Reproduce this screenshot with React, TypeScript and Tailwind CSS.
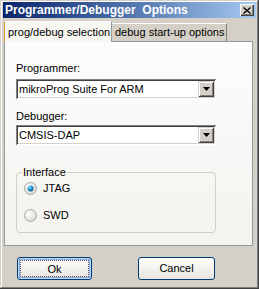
import React from "react";

const font = { fontFamily: '"Liberation Sans", Arial, sans-serif' };

function Select({ value }: { value: string }) {
  return (
    <div className="flex h-[20px] w-[200px] items-stretch bg-white shadow-[inset_1px_1px_#808080,inset_-1px_-1px_#ffffff,inset_2px_2px_#404040,inset_-2px_-2px_#d4d0c8] p-[2px]">
      <div className="flex-1 whitespace-nowrap pl-[1px] text-[11px] leading-[16px] text-black">{value}</div>
      <div className="flex w-[16px] items-center justify-center bg-[#d4d0c8] shadow-[inset_1px_1px_#d4d0c8,inset_-1px_-1px_#404040,inset_2px_2px_#ffffff,inset_-2px_-2px_#808080]">
        <svg width="7" height="4" viewBox="0 0 7 4">
          <path d="M0 0h7L3.5 4z" fill="#000" />
        </svg>
      </div>
    </div>
  );
}

function Radio({ checked, label }: { checked?: boolean; label: string }) {
  return (
    <div className="flex items-center gap-[6px]">
      <svg width="13" height="13" viewBox="0 0 13 13">
        <defs>
          <radialGradient id={"rg" + label} cx="0.35" cy="0.35" r="0.8">
            <stop offset="0" stopColor="#ffffff" />
            <stop offset="1" stopColor="#d6d3ce" />
          </radialGradient>
          <radialGradient id={"rd" + label} cx="0.35" cy="0.3" r="0.7">
            <stop offset="0" stopColor="#8ee4ff" />
            <stop offset="0.5" stopColor="#2a9ad8" />
            <stop offset="1" stopColor="#0a5b8a" />
          </radialGradient>
        </defs>
        <circle cx="6.5" cy="6.5" r="6" fill={"url(#rg" + label + ")"} stroke="#a8a8a0" strokeWidth="1" />
        {checked && <circle cx="6.5" cy="6.5" r="3" fill={"url(#rd" + label + ")"} />}
      </svg>
      <span className="text-[11px] leading-[14px] text-black">{label}</span>
    </div>
  );
}

export default function App() {
  return (
    <div
      className="flex h-[289px] w-[259px] flex-col bg-[#d4d0c8] px-[2px] pt-[2px] shadow-[inset_-1px_-1px_#404040,inset_1px_1px_#d4d0c8,inset_-2px_-2px_#808080,inset_2px_2px_#ffffff]"
      style={font}
    >
      {/* title bar */}
      <div className="ml-[1px] mr-[1px] flex h-[16px] items-center justify-between bg-gradient-to-r from-[#0a246a] to-[#a6caf0] pl-[2px] pr-[2px]">
        <span className="whitespace-nowrap text-[12px] font-bold leading-[16px] text-white">
          Programmer/Debugger&nbsp; Options
        </span>
        <div className="flex h-[12px] w-[14px] items-center justify-center bg-[#d4d0c8] shadow-[inset_1px_1px_#ffffff,inset_-1px_-1px_#404040,inset_-2px_-2px_#808080]">
          <svg width="8" height="7" viewBox="0 0 8 7">
            <path d="M0.5 0.5L7.5 6.5M7.5 0.5L0.5 6.5" stroke="#000" strokeWidth="1.3" />
          </svg>
        </div>
      </div>

      {/* tabs */}
      <div className="relative z-10 mt-[3px] flex items-end pl-[2px]">
        <div className="relative -mb-[1px] flex h-[21px] w-[108px] items-center whitespace-nowrap border-l border-t border-r border-l-[#e0a040] border-t-[#fcfcfc] border-r-[#919b9c] bg-[#f7f6f1] pl-[3px] text-[11px] text-black">
          prog/debug selection
        </div>
        <div className="flex h-[18px] w-[115px] items-center whitespace-nowrap border-t border-r border-t-[#ffffff] border-r-[#808080] bg-[#d4d0c8] pl-[3px] text-[11px] text-black">
          debug start-up options
        </div>
      </div>

      {/* panel */}
      <div className="ml-[2px] mr-[4px] flex h-[205px] flex-col border border-[#919b9c] bg-gradient-to-b from-[#fcfcfe] to-[#f4f3ee] px-[11px] pt-[19px]">
        <div className="mb-[4px] text-[11px] leading-[14px] text-black">Programmer:</div>
        <Select value="mikroProg Suite For ARM" />
        <div className="mb-[2px] mt-[10px] text-[11px] leading-[14px] text-black">Debugger:</div>
        <Select value="CMSIS-DAP" />
        <div className="relative mt-[27px] h-[61px] w-[200px] rounded-[4px] border border-[#d0d0bf]">
          <span className="absolute -top-[8px] left-[5px] bg-[#f6f5f1] px-[1px] text-[11px] leading-[14px] text-black">
            Interface
          </span>
          <div className="flex flex-col gap-[13px] pl-[7px] pt-[8px]">
            <Radio checked label="JTAG" />
            <Radio label="SWD" />
          </div>
        </div>
      </div>

      {/* buttons */}
      <div className="flex gap-[46px] pl-[15px] pt-[11px]">
        <button className="relative flex h-[23px] w-[75px] items-center justify-center rounded-[3px] border border-[#003c74] bg-gradient-to-b from-[#ffffff] to-[#e6e5de] text-[11px] text-black shadow-[inset_0_0_0_1px_#bcd4f6,inset_0_0_0_2px_#89ade4]">
          <span className="absolute inset-[2px] border border-dotted border-[#555]" />
          <span className="leading-[14px]">Ok</span>
        </button>
        <button className="flex h-[23px] w-[77px] items-center justify-center rounded-[3px] border border-[#003c74] bg-gradient-to-b from-[#ffffff] to-[#e6e5de] text-[11px] text-black">
          Cancel
        </button>
      </div>
    </div>
  );
}
